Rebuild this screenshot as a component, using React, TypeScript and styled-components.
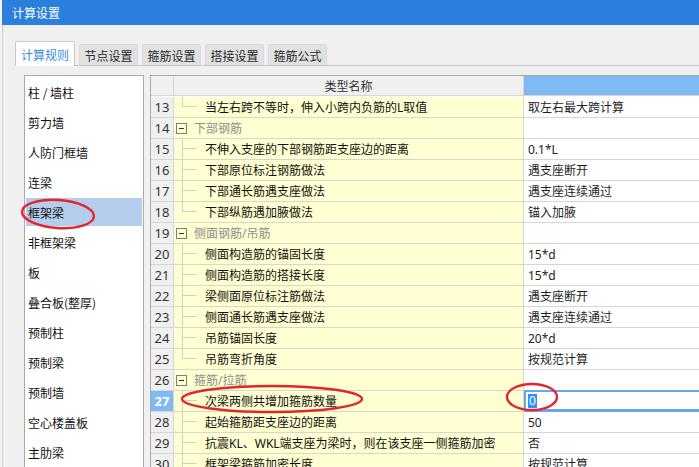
import styled, { createGlobalStyle } from 'styled-components'

type Row = {
  n: number
  kind: 'group' | 'item'
  name: string
  value?: string
  last?: boolean
  editing?: boolean
}

const rows: Row[] = [
  { n: 13, kind: 'item', last: true, name: '当左右跨不等时，伸入小跨内负筋的L取值', value: '取左右最大跨计算' },
  { n: 14, kind: 'group', name: '下部钢筋' },
  { n: 15, kind: 'item', name: '不伸入支座的下部钢筋距支座边的距离', value: '0.1*L' },
  { n: 16, kind: 'item', name: '下部原位标注钢筋做法', value: '遇支座断开' },
  { n: 17, kind: 'item', name: '下部通长筋遇支座做法', value: '遇支座连续通过' },
  { n: 18, kind: 'item', last: true, name: '下部纵筋遇加腋做法', value: '锚入加腋' },
  { n: 19, kind: 'group', name: '侧面钢筋/吊筋' },
  { n: 20, kind: 'item', name: '侧面构造筋的锚固长度', value: '15*d' },
  { n: 21, kind: 'item', name: '侧面构造筋的搭接长度', value: '15*d' },
  { n: 22, kind: 'item', name: '梁侧面原位标注筋做法', value: '遇支座断开' },
  { n: 23, kind: 'item', name: '侧面通长筋遇支座做法', value: '遇支座连续通过' },
  { n: 24, kind: 'item', name: '吊筋锚固长度', value: '20*d' },
  { n: 25, kind: 'item', last: true, name: '吊筋弯折角度', value: '按规范计算' },
  { n: 26, kind: 'group', name: '箍筋/拉筋' },
  { n: 27, kind: 'item', name: '次梁两侧共增加箍筋数量', value: '0', editing: true },
  { n: 28, kind: 'item', name: '起始箍筋距支座边的距离', value: '50' },
  { n: 29, kind: 'item', name: '抗震KL、WKL端支座为梁时，则在该支座一侧箍筋加密', value: '否' },
  { n: 30, kind: 'item', name: '框架梁箍筋加密长度', value: '按规范计算' },
]

const tabs = ['计算规则', '节点设置', '箍筋设置', '搭接设置', '箍筋公式']

const components = [
  '柱 / 墙柱',
  '剪力墙',
  '人防门框墙',
  '连梁',
  '框架梁',
  '非框架梁',
  '板',
  '叠合板(整厚)',
  '预制柱',
  '预制梁',
  '预制墙',
  '空心楼盖板',
  '主肋梁',
]

const GlobalStyle = createGlobalStyle`
  body {
    margin: 0;
    background: #f4f4f4;
    font-family: "Noto Sans", "Noto Sans CJK SC", sans-serif;
    font-size: 12px;
    color: #1e1e1e;
  }
`

const Page = styled.div`
  position: relative;
  width: 699px;
  height: 467px;
  overflow: hidden;
  padding-left: 2px;
  box-sizing: border-box;
`

const Window = styled.div`
  display: flex;
  flex-direction: column;
  height: 100%;
  background: #f0f0f0;
`

const TitleBar = styled.div`
  height: 25px;
  flex-shrink: 0;
  background: #2b7fdd;
  color: #fff;
  display: flex;
  align-items: center;
  padding-left: 10px;
  font-family: "Noto Sans CJK SC", sans-serif;
  font-size: 12px;
`

const Body = styled.div`
  flex: 1;
  display: flex;
  flex-direction: column;
  border-left: 1px solid #cdcdcd;
  padding: 16px 0 0 12px;
  min-height: 0;
`

const TabStrip = styled.div`
  display: flex;
  align-items: flex-end;
  gap: 4px;
  height: 24px;
  border-bottom: 1px solid #c9c9c9;
  flex-shrink: 0;
`

const Tab = styled.div<{ $active?: boolean }>`
  box-sizing: border-box;
  display: flex;
  align-items: center;
  justify-content: center;
  font-family: "Noto Sans CJK SC", sans-serif;
  font-size: 12px;
  border-radius: 2px 2px 0 0;
  height: ${(p) => (p.$active ? '25px' : '21px')};
  width: ${(p) => (p.$active ? '60px' : '59px')};
  margin-bottom: ${(p) => (p.$active ? '-1px' : '0')};
  background: ${(p) => (p.$active ? '#ffffff' : '#e1e1e1')};
  color: ${(p) => (p.$active ? '#3a8ae2' : '#2a2a2a')};
  border: 1px solid ${(p) => (p.$active ? '#c9c9c9' : '#dadada')};
  border-bottom: ${(p) => (p.$active ? 'none' : '0')};
`

const Panel = styled.div`
  display: flex;
  align-items: stretch;
  gap: 6px;
  padding: 9px 0 0 9px;
  margin-right: -10px;
`

const ComponentList = styled.div`
  width: 118px;
  flex-shrink: 0;
  display: flex;
  flex-direction: column;
  background: #fff;
  border: 1px solid #a9a9a9;
  padding-top: 1px;
`

const ListItem = styled.div<{ $selected?: boolean }>`
  height: 28px;
  flex-shrink: 0;
  margin: 1px 1px;
  padding-left: 2px;
  display: flex;
  align-items: center;
  font-family: "Noto Sans CJK SC", sans-serif;
  font-size: 12px;
  color: #111;
  background: ${(p) => (p.$selected ? '#b4cdec' : 'transparent')};
`

const Grid = styled.div`
  flex: 1;
  display: grid;
  grid-template-columns: 23px 350px 1fr;
  grid-auto-rows: 21px;
  align-content: start;
  background: #fff;
  border-left: 1px solid #a9a9a9;
  border-top: 1px solid #a9a9a9;
`

const Cell = styled.div`
  box-sizing: border-box;
  border-right: 1px solid #d6d6d6;
  border-bottom: 1px solid #d6d6d6;
  display: flex;
  align-items: center;
  white-space: nowrap;
  overflow: hidden;
`

const HeaderCell = styled(Cell)<{ $accent?: boolean }>`
  height: 20px;
  justify-content: center;
  background: ${(p) => (p.$accent ? '#7fb9f6' : '#f0f0f0')};
  color: #333;
  font-family: "Noto Sans CJK SC", sans-serif;
`

const NumCell = styled(Cell)<{ $current?: boolean }>`
  justify-content: center;
  font-size: 13px;
  background: ${(p) => (p.$current ? '#7fb9f6' : '#f0f0f0')};
  color: ${(p) => (p.$current ? '#fff' : '#333')};
  font-weight: ${(p) => (p.$current ? 700 : 400)};
`

const NameCell = styled(Cell)`
  background: #ffffd2;
  align-items: stretch;
`

const ValueCell = styled(Cell)<{ $editing?: boolean }>`
  padding-left: 4px;
  box-shadow: ${(p) => (p.$editing ? 'inset 0 0 0 2px #6aa7ea' : 'none')};
  border-bottom-color: ${(p) => (p.$editing ? '#6aa7ea' : '#d6d6d6')};
  margin-top: ${(p) => (p.$editing ? '-1px' : '0')};
  height: ${(p) => (p.$editing ? '22px' : 'auto')};
`

const Connector = styled.span<{ $last?: boolean }>`
  width: 15px;
  margin-left: 8px;
  display: grid;
  grid-template-rows: 1fr 1fr;
  flex-shrink: 0;

  &::before {
    content: '';
    border-left: 1px solid #cfcfcf;
    border-bottom: 1px solid #cfcfcf;
  }

  &::after {
    content: '';
    border-left: ${(p) => (p.$last ? 'none' : '1px solid #cfcfcf')};
  }
`

const Toggle = styled.span`
  align-self: center;
  box-sizing: border-box;
  width: 11px;
  height: 11px;
  margin-left: 2px;
  border: 1px solid #7d7d7d;
  display: flex;
  align-items: center;
  justify-content: center;
  flex-shrink: 0;

  &::after {
    content: '';
    width: 5px;
    height: 1px;
    background: #333;
  }
`

const Label = styled.span<{ $group?: boolean }>`
  align-self: center;
  margin-left: ${(p) => (p.$group ? '7px' : '8px')};
  color: ${(p) => (p.$group ? '#8e8e8e' : '#111')};
`

const Selected = styled.span`
  background: #3391ff;
  color: #fff;
  padding: 0 1px;
  line-height: 14px;
`

const Marks = styled.svg`
  position: absolute;
  left: 0;
  top: 0;
  pointer-events: none;
`

export default function App() {
  return (
    <>
      <GlobalStyle />
      <Page>
        <Window>
          <TitleBar>计算设置</TitleBar>
          <Body>
            <TabStrip>
              {tabs.map((t, i) => (
                <Tab key={t} $active={i === 0}>
                  {t}
                </Tab>
              ))}
            </TabStrip>
            <Panel>
              <ComponentList>
                {components.map((c) => (
                  <ListItem key={c} $selected={c === '框架梁'}>
                    {c}
                  </ListItem>
                ))}
              </ComponentList>
              <Grid>
                <HeaderCell />
                <HeaderCell>类型名称</HeaderCell>
                <HeaderCell $accent />
                {rows.map((r) => (
                  <GridRow key={r.n} row={r} />
                ))}
              </Grid>
            </Panel>
          </Body>
        </Window>
        <Marks width="699" height="467" viewBox="0 0 699 467">
          <g fill="none" stroke="#e3262b" strokeWidth="2.4">
            <ellipse cx="58" cy="214" rx="36" ry="14" transform="rotate(4 58 214)" />
            <ellipse cx="272" cy="399" rx="90" ry="13" />
            <ellipse cx="532" cy="397" rx="25" ry="13" />
          </g>
        </Marks>
      </Page>
    </>
  )
}

const GridRow = ({ row }: { row: Row }) => (
  <>
    <NumCell $current={row.editing}>{row.n}</NumCell>
    <NameCell>
      {row.kind === 'group' ? <Toggle /> : <Connector $last={row.last} />}
      <Label $group={row.kind === 'group'}>{row.name}</Label>
    </NameCell>
    <ValueCell $editing={row.editing}>
      {row.editing ? <Selected>{row.value}</Selected> : row.value}
    </ValueCell>
  </>
)
